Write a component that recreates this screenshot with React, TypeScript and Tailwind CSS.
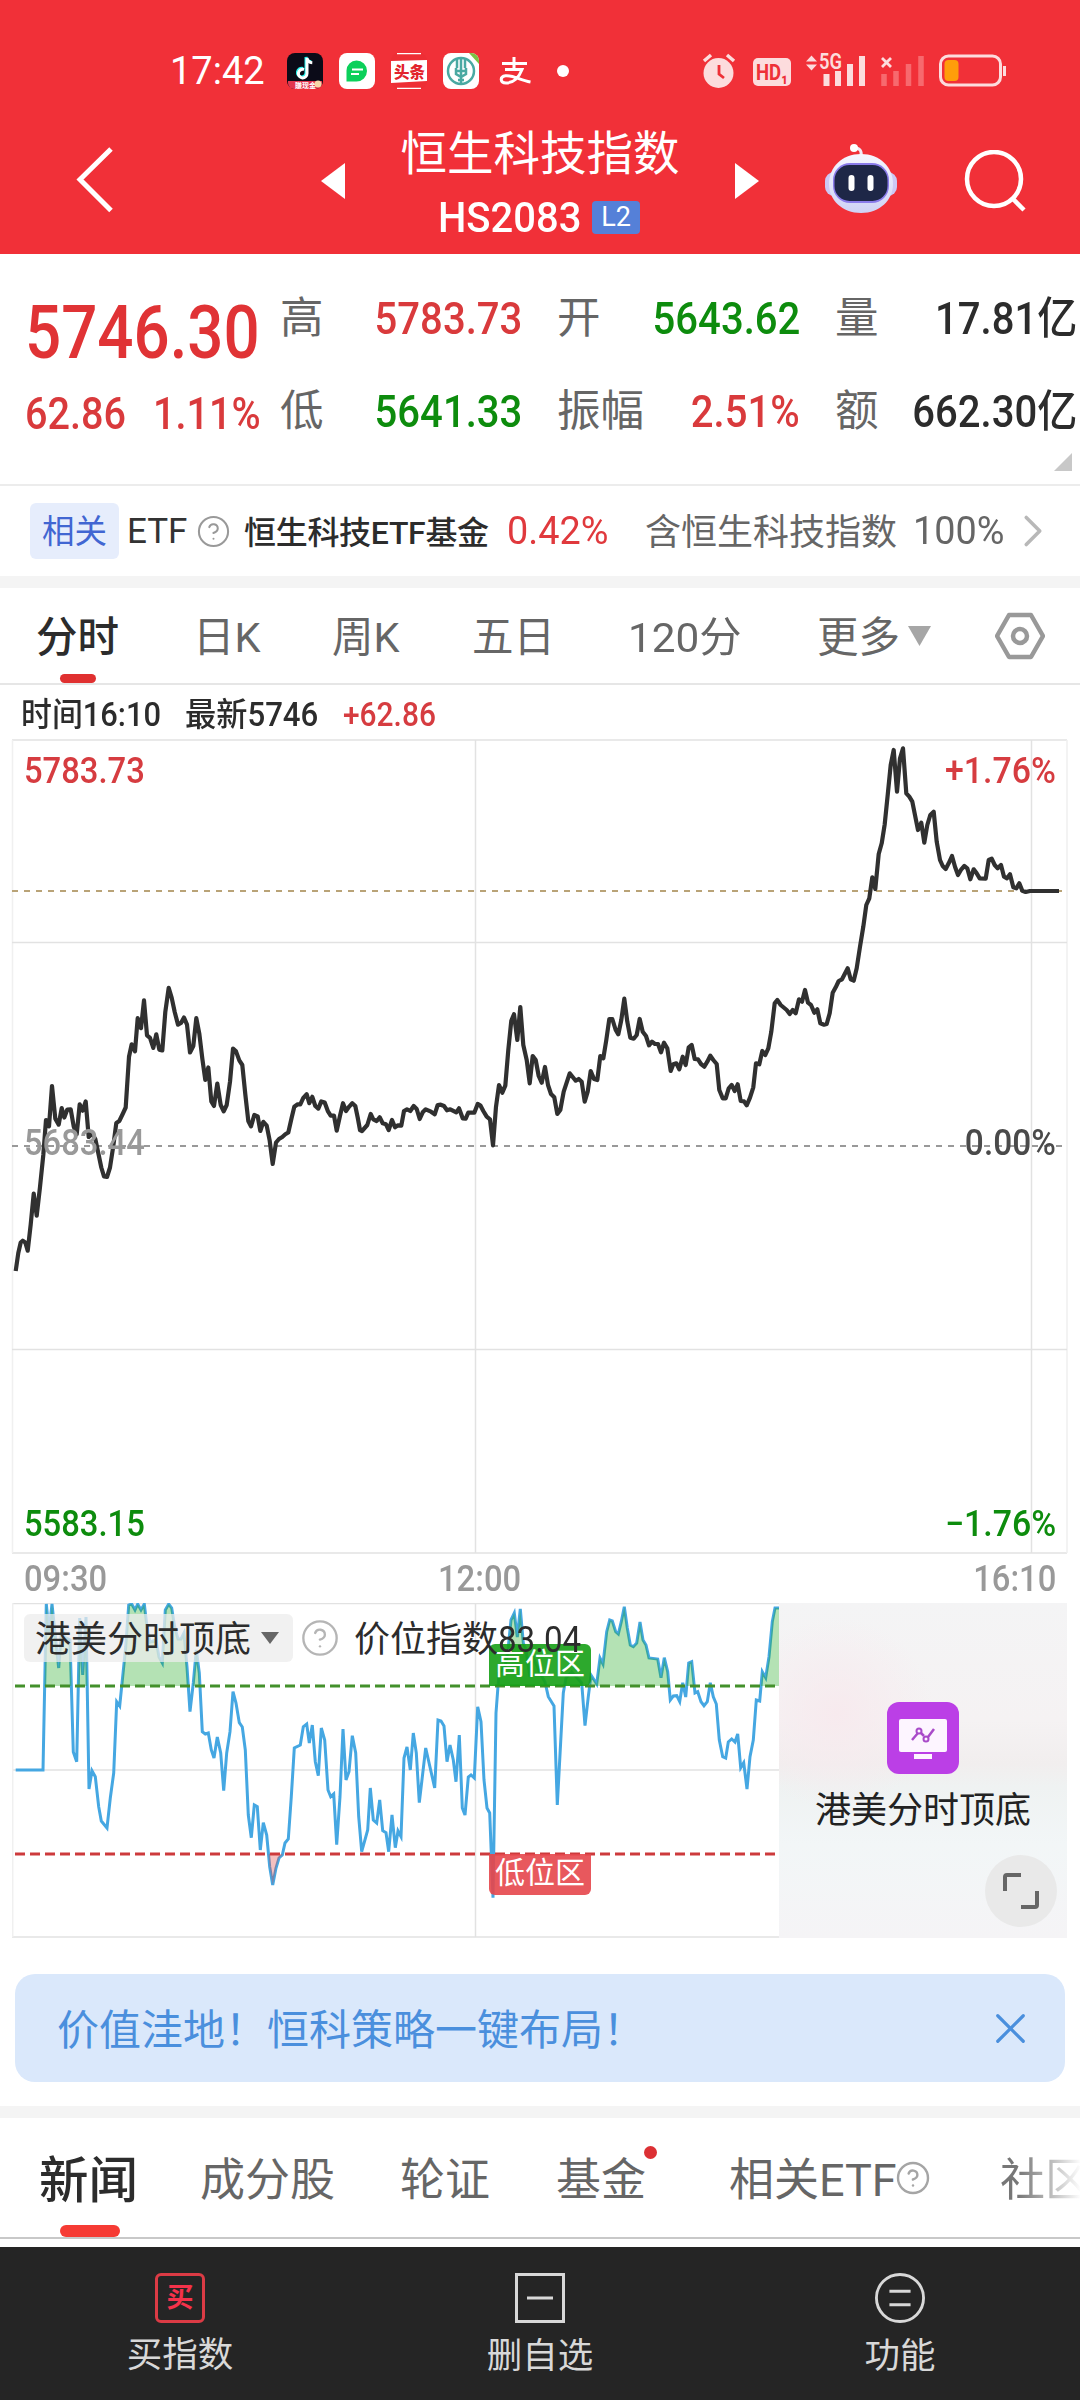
import { ChevronRight, CircleQuestionMark, X } from "lucide-react";

const pricePoints =
  "15.7,1271 18.3,1253 20.7,1242.5 22.7,1240.7 25.3,1242.5 27.7,1250.7 30.7,1224.6 33.7,1193.6 36.7,1215.7 40,1187 43.3,1155 46,1120 49,1126.4 52,1086 55.3,1118.6 58.7,1124.6 61.7,1108 64.3,1117.5 67.3,1109.6 70.7,1109.3 73.7,1126.4 76.7,1134.3 79.7,1104.3 82.7,1110.7 85.7,1101.4 88.7,1137 92,1133.6 95.3,1139 98.7,1155 101.3,1167.5 104,1176.4 107,1177 110,1167.5 113.3,1146 116.3,1122.9 119.3,1121 122.7,1114 125.7,1107.5 129,1056.8 131.7,1044.3 135,1051.4 137.7,1018.2 141,1028.2 144,1000.4 147,1035.4 150,1037.9 153.3,1047.9 156.3,1034.3 159.3,1049.6 162.3,1050.4 165.3,1012 168.7,987.9 171.7,997.9 174.7,1012 178,1024.6 181,1022.9 184,1017.5 187,1024.6 190,1052.5 193.3,1046 196.3,1018.2 199.3,1033.6 202.3,1058.6 205.3,1080 208.3,1067.5 211.3,1101.4 214,1106 217.3,1083.6 220.7,1105 223.7,1111.4 226.7,1105 230,1081.8 233,1048.6 236,1051.4 239.3,1060.4 242.3,1065 245.3,1094.3 248.3,1121 251,1126.4 254.3,1115 257.7,1116.4 260.3,1131 263.3,1121.8 266.7,1125.7 269.7,1140.7 272.7,1164 276,1142.5 279,1139 282.3,1137 285.3,1134.3 288.3,1132.5 291.7,1117.5 294.3,1106.8 297.7,1104.3 300.3,1104.3 303.3,1097.9 306.7,1094.3 309.3,1103.2 312.3,1096.8 315.3,1106 318.3,1108.6 321.3,1101.4 324.7,1102.5 328,1111.4 330.7,1115.7 334,1115.7 336.7,1130.7 340,1115.7 343,1103.2 346,1111 349,1106.8 352.3,1103.2 355.3,1106 357.7,1117.5 360,1130 " +
  "362,1131 367.3,1125 370.7,1114 373.3,1119.3 376.7,1121 379.7,1117.3 382.7,1123.3 386,1124.3 388.7,1130 392,1120 395,1127.3 398,1125.3 401.3,1125.7 404,1111 407,1109.3 410.3,1111 413.7,1106 416.7,1109 419.7,1119 422.7,1112.3 425.7,1109.3 431,1111.7 434.7,1114.3 437.7,1105 440.7,1104.7 444,1106 447,1110.3 450.3,1109.3 456.3,1112.3 459,1108.3 462.7,1118.3 465.7,1118.7 468.3,1112.7 474.3,1112.7 477.7,1104 480.3,1105.3 483.3,1111 486.7,1116.7 490,1119.3 493,1145.3 496,1106.7 499,1085 502.3,1092.7 505.3,1085.7 508.3,1050 511.3,1020.7 514,1014.3 517.3,1040 520.3,1007 523.3,1045 526.7,1060 529.7,1083.3 532.7,1056 535.7,1060 538.7,1076 541.7,1082.7 545,1067 548,1085 551,1094 554.3,1097.3 557.3,1114 560.3,1110 563.7,1091.7 569.7,1073.3 575.7,1080.7 578.7,1079 581.7,1081.7 584.7,1101.7 587.7,1091.7 590.7,1071 594,1079 597.3,1080 600.3,1056 603.3,1058.3 606.3,1040 609.3,1019 612.3,1019 615.7,1030 618.3,1034.3 621.3,1020 624.3,998.7 627.3,1021.7 630.3,1037.7 633.7,1038.7 636.7,1035 639.7,1019 642.7,1031.7 646,1036 649,1045.3 652,1041.7 655,1044 658,1044 661,1052.3 664,1042.7 667.3,1048.3 670.7,1071 673.3,1064.3 676.3,1063.3 679.3,1069.3 682.7,1056.7 685.7,1065 688.7,1047.3 691.7,1045 694.7,1059 698,1059.3 701,1064 704.3,1066.7 707.3,1061.7 710.3,1055.7 713.3,1060 716.7,1064 719.3,1090 722.7,1098.3 725.7,1098.3 728.7,1088.3 731.7,1085 734.7,1091 737.7,1084.3 740.7,1101 744,1101.3 746.7,1105.3 750,1097.7 753.3,1087.3 " +
  "756,1063.3 759.3,1064.3 762.3,1051 765.3,1055 768.3,1048.3 771.3,1031.7 774.7,1003.3 777.3,1000 780.7,1005 786.7,1010 789.7,1014 792.7,1010 795.7,1013.3 799,999.3 802,1001.7 805,990 808,1002.7 811,1005 814.3,1012.7 817.3,1009.3 820.3,1023.3 824,1024.7 826.7,1024 829.7,1013.3 832.7,992.7 835.7,987.3 838.7,981 842,979.3 847.7,968.3 850.7,979.3 853.7,980.7 856.7,968.3 860,946.7 863.3,926.7 866.3,905 869.3,898.3 872.3,877.3 875.3,889 878.7,854 881.7,843.3 884.7,824.3 887.7,795 890.7,765 893.7,750 897,791.7 900,758.3 903,748.3 906.3,793.3 909.3,796.7 912.3,801.7 915.3,816.7 918,830 921.3,822.7 924.3,842.7 927.3,825 930.3,815 933.7,811.7 936.7,841.7 940,860 942.7,866 945.7,869 948.7,863.3 952,856 955,866.7 958,875 961.3,869.3 964.3,866 967.3,868.3 970.3,879.3 973.7,869.3 976.7,873.3 979.7,878.3 985.7,878.7 988.7,860 991.7,858.7 994.7,865 997.7,868.3 1001,865 1004,876.7 1007,878.3 1010,874.3 1013.3,887.3 1016.3,888.3 1019.3,883.3 1022.3,890.7 1025.7,892 1030,891 1059,891";

const levelPoints =
  "15.7,1770 43,1770 46.3,1604 49,1632 52,1604 55.3,1636 58.7,1668 61.7,1627 64.3,1637 70,1640 73.3,1752 76.7,1761.7 79.7,1618 82.7,1675 86,1617 89,1789 92,1770.7 95.3,1776.7 98.7,1806.7 101.3,1821 107,1828 110.3,1798 113.7,1773 116.7,1701.7 119.7,1706 125.7,1647 128.7,1605 131.7,1604 135,1610 137.7,1604 141,1610 144.3,1604 147,1627 150,1642 156,1640 159,1657 162.3,1663 165.3,1610 168.7,1604 171.7,1608 174.7,1627 178,1639 181,1639 184,1633 187,1667 190,1711.7 193.3,1683 196.3,1650 199.3,1673 202.3,1731.7 205.3,1734 208.3,1733 211.3,1750 214,1758 217.3,1737 220.7,1753 223.7,1790.7 226.7,1753 230,1731.7 233,1691.7 236,1703 239.3,1722.7 242.3,1727 245.3,1750 248.3,1815 251.3,1837.7 254.3,1805 257.3,1806.7 260.3,1850 263.3,1822.7 266.7,1835 269.7,1866.7 272.7,1885 276,1868 279,1858 282.3,1855 285,1843 288.3,1839 291.3,1796.7 294.3,1748 300.3,1745 303.3,1726.7 306.7,1724 309.3,1743 312.3,1725 315.3,1761.7 318.3,1775.7 321.3,1728 324.7,1740 328,1790 330.7,1796.7 333.7,1794 336.7,1844.7 340,1796.7 343,1729 346,1780 349,1771.7 352.3,1735.7 355.7,1753 358.7,1816.7 361.7,1851.7 367.7,1830 370.3,1788 373.3,1820 376.7,1823 379.7,1800 382.7,1830.7 386,1832.7 388.7,1851.7 392,1815 395.3,1847.7 398,1831 401,1836.7 404,1758 407,1747 410.3,1770 413.3,1733 416.3,1753 419.3,1802.7 " +
  "425.7,1748 434.7,1788 438,1720 441,1721 444,1726 447,1761.7 450,1745 453.3,1760 456,1781.7 459.3,1735 462.3,1808 465,1815 468.3,1777 471,1775 474.3,1778 477.7,1706.7 481,1721.7 484,1780 487,1808 489.7,1813 493,1897.7 496,1713 499,1673 505,1667 508,1650 511,1620 514.3,1613 517.3,1637 520.3,1609 523.3,1643 526,1650 530,1677 533,1657 540,1673 545,1682 548.3,1696.7 554,1706 557.3,1805 563.3,1693 566,1678 571.7,1672 581.7,1683 585,1725.7 588.3,1696.7 591,1675 596.7,1684 600,1658 603,1664 606.7,1631.7 609.7,1620 612.3,1621 615.7,1631.7 618.3,1634 621.3,1621.7 624.3,1606.7 627.3,1628 630.3,1645 633.3,1646.7 636.7,1643 640,1622 643,1640 646,1645 649,1658 657.7,1659 661,1677.7 664.3,1657.7 667.7,1671.7 670.3,1700 673.3,1696 676.7,1695.7 679.7,1701.7 682.7,1682.7 685.7,1697 688.7,1663 691.7,1661.7 695,1693 697.7,1691.7 701,1701.7 704,1705.7 707.3,1701.7 710.3,1682.7 713.3,1696.7 716.3,1704 719.3,1740 722.7,1756.7 725.7,1758 728.3,1742 731.7,1739 735,1742 737.7,1734 740.7,1767.7 743.7,1762.7 747,1789 750,1756.7 753.3,1740 756.3,1700 759.7,1701 762.3,1671.7 765.7,1677.7 769,1656.7 772.3,1621.7 775,1608 779,1608";

const quotes = [
  { label: "高", value: "5783.73", color: "text-[#d93a3c]" },
  { label: "开", value: "5643.62", color: "text-[#0d8c0d]" },
  { label: "量", value: "17.81亿", color: "text-[#2c2c2c]" },
  { label: "低", value: "5641.33", color: "text-[#0d8c0d]" },
  { label: "振幅", value: "2.51%", color: "text-[#d93a3c]" },
  { label: "额", value: "662.30亿", color: "text-[#2c2c2c]" },
];

function StatusBar() {
  return (
    <div className="flex h-[108px] items-center pt-[34px] pl-[170px] text-white">
      <span className="w-[117px] text-[38px] leading-none">17:42</span>
      <div className="flex items-center gap-4">
        <svg width="36" height="36" viewBox="0 0 36 36">
          <rect width="36" height="36" rx="8" fill="#0b0b18" />
          <path d="M17 18.5a4.3 4.3 0 1 0 3 4V7c.6 3 2.7 4.6 5.3 4.8" transform="translate(-1 -3)" fill="none" stroke="#25f4ee" strokeWidth="3" />
          <path d="M17 18.5a4.3 4.3 0 1 0 3 4V7c.6 3 2.7 4.6 5.3 4.8" transform="translate(0 -2)" fill="none" stroke="#fff" strokeWidth="3" />
          <path d="M1 28h34v2a6 6 0 0 1-6 6H7a6 6 0 0 1-6-6z" fill="#e2354f" />
          <text x="8" y="34.5" fontSize="7" fill="#fff" fontWeight="700">賺现金</text>
          <circle cx="31" cy="31" r="3.5" fill="#f6d8a8" />
        </svg>
        <svg width="36" height="36" viewBox="0 0 36 36">
          <rect width="36" height="36" rx="8" fill="#fff" />
          <path d="M17.5 7.5a10.5 10.5 0 1 1 0 21H7.5V17.5a10 10 0 0 1 10-10z" fill="#0bd05a" />
          <path d="M13 16.5h11M12 21h8" stroke="#fff" strokeWidth="2" />
        </svg>
        <svg width="36" height="36" viewBox="0 0 36 36">
          <rect width="36" height="36" rx="8" fill="#ee2e35" />
          <path d="M6 .7h24M6 35.3h24" stroke="#fff" strokeWidth="1.2" />
          <path d="M0 8l36-1v21L0 30z" fill="#fff" />
          <text x="3" y="24.5" fontSize="15.5" fontWeight="900" fill="#e2232c">头条</text>
        </svg>
        <svg width="36" height="36" viewBox="0 0 36 36">
          <rect width="36" height="36" rx="8" fill="#fff" />
          <path d="M26 0h2a8 8 0 0 1 8 8v3z" fill="#7cc244" />
          <circle cx="18" cy="18" r="13" fill="none" stroke="#4aa9a2" strokeWidth="2.5" />
          <path d="M18 5v26M14 6v9M22 6v9M13 15v6l5 3 5-3v-6M14 18h8M15 27h6" stroke="#4aa9a2" strokeWidth="2.5" fill="none" />
        </svg>
        <svg width="36" height="36" viewBox="0 0 36 36" fill="none" stroke="#fff" strokeWidth="3" className="ml-[2px]">
          <path d="M5 10.5h25M17 4v12M8 16.5h17c-3 8-9 13.5-16 13.5-6 0-6.5-6.5-.5-7.3 7-.8 14 4.3 25 6.3" />
        </svg>
        <span className="ml-[8px] size-[12px] rounded-full bg-white" />
      </div>
      <svg className="ml-auto mr-[72px] overflow-visible" width="306" height="40" viewBox="702 51 306 40" fill="none">
        <circle cx="718.5" cy="73" r="15" fill="#fcdcdd" />
        <path d="M704 61l7-6M734 61l-7-6" stroke="#fcdcdd" strokeWidth="3.5" />
        <path d="M719 65v9l5 4" stroke="#ee3037" strokeWidth="2.8" />
        <rect x="753" y="58" width="38" height="28" rx="5" fill="#fcdcdd" />
        <text x="756" y="80" fontSize="22" fontWeight="700" fill="#ee3037" textLength="32" lengthAdjust="spacingAndGlyphs">HD₁</text>
        <path d="M806 61.5l5.5-6 5.5 6zM806 64.5l5.5 6 5.5-6z" fill="#fcdcdd" />
        <text x="819" y="69" fontSize="22" fontWeight="600" fill="#fcdcdd" textLength="23" lengthAdjust="spacingAndGlyphs">5G</text>
        <path d="M826.5 86v-12M838 86v-15M850 86v-22M862 86v-30" stroke="#fcdcdd" strokeWidth="6" />
        <path d="M882 58l9 9M891 58l-9 9" stroke="#fcdcdd" strokeWidth="2.8" />
        <path d="M884 86v-12M896 86v-15M908.5 86v-22M921 86v-30" stroke="#f7696e" strokeWidth="5.5" />
        <rect x="940.5" y="56" width="60" height="29" rx="8" stroke="#fcdcdd" strokeWidth="3" />
        <rect x="944.5" y="60" width="14" height="21" rx="4" fill="#ff9d0a" />
        <path d="M1004.5 66v10" stroke="#fcdcdd" strokeWidth="3" />
      </svg>
    </div>
  );
}

function Robot() {
  return (
    <svg width="74" height="72" viewBox="0 0 74 72">
      <defs>
        <linearGradient id="head" x1="0" y1="0" x2="0" y2="1">
          <stop offset="0" stopColor="#f6f7ff" />
          <stop offset="1" stopColor="#cfd2f5" />
        </linearGradient>
      </defs>
      <path d="M37 14c1-6-1-9-6-9" stroke="#f3e9f5" strokeWidth="3" fill="none" />
      <circle cx="30" cy="5" r="4" fill="#fff" />
      <rect x="1" y="29" width="72" height="24" rx="9" fill="#cdc8f4" />
      <path d="M37 11c19 0 32 13 32 30 0 16-13 29-32 29S5 57 5 41c0-17 13-30 32-30z" fill="url(#head)" />
      <rect x="9" y="20" width="56" height="40" rx="17" fill="#8a7bea" />
      <rect x="10.5" y="22" width="53" height="36" rx="15" fill="#1e2747" />
      <path d="M27.5 35v10M46.5 35v10" stroke="#fff" strokeWidth="6" strokeLinecap="round" />
    </svg>
  );
}

function Header() {
  return (
    <header className="h-[254px] bg-[#f13038]">
      <StatusBar />
      <div className="flex h-[146px] items-center text-white">
        <svg className="mb-[5px] ml-[75px]" width="40" height="68" viewBox="0 0 40 68" fill="none" stroke="#fff" strokeWidth="5">
          <path d="M36 4L5 34.5l31 31" />
        </svg>
        <svg className="ml-[206px]" width="24" height="36" viewBox="0 0 24 36" fill="#fff">
          <path d="M24 0v36L0 18z" />
        </svg>
        <div className="mx-[55px] flex w-[280px] flex-col items-center pt-[8px]">
          <h1 className="h-[66px] whitespace-nowrap text-[46.5px] leading-[60px]">恒生科技指数</h1>
          <div className="flex items-center">
            <span className="w-[154px] whitespace-nowrap">
              <span className="inline-block origin-left scale-x-[.94] text-[42.5px] leading-[56px] font-medium">HS2083</span>
            </span>
            <span className="mr-[2px] mb-[2px] flex h-[33px] w-[48px] items-center justify-center rounded-sm bg-[#5580d8] text-[27px]">L2</span>
          </div>
        </div>
        <svg width="24" height="36" viewBox="0 0 24 36" fill="#fff">
          <path d="M0 0v36l24-18z" />
        </svg>
        <div className="mb-[4px] ml-[65px]">
          <Robot />
        </div>
        <svg className="ml-[66px]" width="62" height="62" viewBox="0 0 62 62" fill="none" stroke="#fff" strokeWidth="4.5">
          <circle cx="30" cy="29" r="27" />
          <path d="M49 49l11 11" />
        </svg>
      </div>
    </header>
  );
}

function Summary() {
  return (
    <section className="relative flex h-[232px] border-b-2 border-[#ececec]">
      <div className="w-[280px] pl-[25px] font-medium text-[#e03335]">
        <div className="mt-[42px] h-[74px] w-max origin-left scale-x-[.86] text-[74px] leading-[74px]">5746.30</div>
        <div className="mt-[21px] flex w-max origin-left scale-x-[.9] gap-[30px] text-[44px] leading-[46px] text-[#d93a3c]">
          <span>62.86</span>
          <span>1.11%</span>
        </div>
      </div>
      <div className="grid h-[188px] grid-cols-[242px_243px_242px] gap-x-[35px] pt-[18px] text-[43.5px]">
        {quotes.map((item) => (
          <div key={item.label} className="flex h-[93px] items-center justify-between whitespace-nowrap pt-[1px]">
            <span className="text-[#666]">{item.label}</span>
            <span className={`origin-right scale-x-[.91] text-[44px] font-medium ${item.color}`}>{item.value}</span>
          </div>
        ))}
      </div>
      <svg className="absolute right-[8px] bottom-[13px]" width="18" height="18" viewBox="0 0 18 18">
        <path d="M18 0v18H0z" fill="#c8c8c8" />
      </svg>
    </section>
  );
}

function RelatedEtf() {
  return (
    <section className="flex h-[90px] items-center whitespace-nowrap pl-[30px]">
      <span className="flex h-[56px] w-[89px] items-center justify-center rounded-md bg-[#e6edfc] pt-[3px] text-[32.5px] text-[#4166d2]">相关</span>
      <span className="ml-[8px] w-[69px] pt-[3px] text-[35px] text-[#333]">ETF</span>
      <CircleQuestionMark size={35} strokeWidth={1.4} color="#999" />
      <span className="ml-[13px] w-[263px] pt-[3px] text-[32px] font-medium tracking-[-0.3px] text-[#2c2c2c]">恒生科技ETF基金</span>
      <span className="w-[138px]">
        <span className="inline-block origin-left scale-x-[.97] text-[39px] text-[#e0393d]">0.42%</span>
      </span>
      <span className="w-[268px] pt-[4px] text-[36px] text-[#666]">含恒生科技指数</span>
      <span className="w-[93px]">
        <span className="inline-block origin-left scale-x-[.97] text-[39px] text-[#666]">100%</span>
      </span>
      <ChevronRight size={54} strokeWidth={1.6} color="#b8b8b8" />
    </section>
  );
}

function PeriodTabs() {
  return (
    <nav className="relative flex h-[97px] items-center whitespace-nowrap border-b-2 border-[#e6e6e6] pt-[6px] pl-[36px] text-[41.5px] text-[#666]">
      <span className="w-[157px] font-medium text-[#2c2c2c]">分时</span>
      <span className="w-[139px]">日K</span>
      <span className="w-[140px]">周K</span>
      <span className="w-[156px]">五日</span>
      <span className="w-[189px]">
        <span className="inline-block origin-left scale-x-[1.02]">120分</span>
      </span>
      <span className="w-[90px]">更多</span>
      <svg className="mb-[5px]" width="25" height="20" viewBox="0 0 25 20" fill="#a6a6a6">
        <path d="M1 0h23L12.5 20z" />
      </svg>
      <svg className="mb-[6px] ml-[63px]" width="50" height="48" viewBox="0 0 50 48" fill="none" stroke="#999" strokeWidth="4.5" strokeLinejoin="round">
        <path d="M14 3h22l12 21-12 21H14L2 24z" />
        <circle cx="25" cy="24" r="7" />
      </svg>
      <span className="absolute bottom-0 left-[60px] h-[9px] w-[36px] rounded-full bg-[#e03030]" />
    </nav>
  );
}

function PriceChart() {
  const label = "absolute text-[36px] leading-[36px] font-medium";
  const left = `${label} origin-left scale-x-[.91] left-[24px]`;
  const right = `${label} origin-right scale-x-[.94] right-[24px]`;
  return (
    <section className="relative h-[868px]">
      <svg className="block" width="1080" height="868" viewBox="0 735 1080 868" fill="none">
        <path d="M12 740H1067M12 1553H1067" stroke="#e9e9e9" strokeWidth="2" />
        <path d="M12.5 740V1553M1067 740V1553" stroke="#f0f0f0" strokeWidth="1.5" />
        <path d="M12 942.5H1067M12 1349.5H1067M475.5 740V1553M1031.5 740V1553" stroke="#e2e2e2" strokeWidth="1.5" />
        <path d="M12 891H1062" stroke="#b9a377" strokeWidth="2" strokeDasharray="6 6" />
        <path d="M12 1146H1062" stroke="#999" strokeWidth="2" strokeDasharray="6 6" />
        <polyline points={pricePoints} stroke="#303030" strokeWidth="4.2" strokeLinejoin="round" />
      </svg>
      <span className={`${left} top-[18px] text-[#d63c40]`}>5783.73</span>
      <span className={`${right} top-[18px] text-[#d63c40]`}>+1.76%</span>
      <span className={`${left} top-[390px] text-[#999]`}>5683.44</span>
      <span className={`${label} top-[390px] right-[24px] origin-right scale-x-[.93] text-[#4a4a4a]`}>0.00%</span>
      <span className={`${left} top-[771px] text-[#0d8c0d]`}>5583.15</span>
      <span className={`${right} top-[771px] text-[#0d8c0d]`}>−1.76%</span>
      <span className={`${left} top-[826px] text-[#999]`}>09:30</span>
      <span className={`${label} top-[826px] left-[438px] origin-left scale-x-[.91] text-[#999]`}>12:00</span>
      <span className={`${label} top-[826px] right-[24px] origin-right scale-x-[.91] text-[#999]`}>16:10</span>
    </section>
  );
}

function LevelChart() {
  const highArea = `15.7,1686 ${levelPoints} 779,1686`;
  const lowArea = `15.7,1854 ${levelPoints} 779,1854`;
  return (
    <section className="relative flex h-[335px] pl-[12px] text-[#2c2c2c]">
      <svg className="block shrink-0" width="767" height="335" viewBox="12 1603 767 335" fill="none">
        <clipPath id="high">
          <rect x="12" y="1603" width="767" height="83" />
        </clipPath>
        <clipPath id="low">
          <rect x="12" y="1854" width="767" height="83" />
        </clipPath>
        <path d="M12 1603.5H779M12 1937H779M12 1770H779M475.5 1603V1937" stroke="#e2e2e2" strokeWidth="1.5" />
        <path d="M12.7 1603V1937" stroke="#f0f0f0" strokeWidth="1.5" />
        <polyline points={levelPoints} stroke="#45a7e2" strokeWidth="3" />
        <polygon points={highArea} fill="#1ca81c" fillOpacity=".33" clipPath="url(#high)" />
        <polygon points={lowArea} fill="#e04040" fillOpacity=".33" clipPath="url(#low)" />
        <path d="M15 1686H777" stroke="#43902b" strokeWidth="3" strokeDasharray="10 5" />
        <path d="M15 1854H777" stroke="#cd3a3c" strokeWidth="3" strokeDasharray="10 5" />
      </svg>
      <div className="flex h-[335px] w-[288px] flex-col items-center bg-[radial-gradient(circle_at_20%_33%,#f7eaee_0%,transparent_30%),linear-gradient(180deg,#f4f4f5_0%,#f5f2f3_35%,#f1eeee_48%,#eff2f2_55%,#f2f6f7_72%,#f5f4f6_100%)] pt-[99px]">
        <svg width="72" height="72" viewBox="0 0 72 72" fill="none">
          <rect width="72" height="72" rx="12" fill="#bb3fe6" />
          <rect x="12" y="17" width="48" height="33" rx="2" fill="#fdf5ff" />
          <rect x="27" y="52" width="18" height="5" fill="#fdf5ff" />
          <path d="M25 38l6-7M34 31l3 3M41 35l6-8" stroke="#a94bc9" strokeWidth="2.5" />
          <circle cx="32" cy="29" r="2.5" stroke="#a94bc9" strokeWidth="2" />
          <circle cx="39" cy="37" r="2.5" stroke="#a94bc9" strokeWidth="2" />
        </svg>
        <span className="mt-[11px] whitespace-nowrap text-[36px] leading-[52px] text-[#222]">港美分时顶底</span>
        <span className="mt-[18px] mr-[10px] flex size-[72px] shrink-0 items-center justify-center self-end rounded-full bg-[#e9e9e9]">
          <svg width="38" height="38" viewBox="0 0 38 38" fill="none" stroke="#666" strokeWidth="4">
            <path d="M3 19V5a2 2 0 0 1 2-2h14M35 19v14a2 2 0 0 1-2 2H19" />
          </svg>
        </span>
      </div>
      <span className="absolute top-[41px] left-[489px] flex h-[42px] w-[102px] items-center justify-center rounded-t-md rounded-br-md bg-[#16a016]/90 pb-[3px] text-[30px] text-white">高位区</span>
      <span className="absolute top-[251px] left-[489px] flex h-[41px] w-[102px] items-center justify-center rounded-b-md bg-[#e5464b]/90 pb-[4px] text-[30px] text-white">低位区</span>
      <div className="absolute top-[11px] left-[24px] flex h-[48px] items-center whitespace-nowrap">
        <div className="flex h-[48px] w-[269px] items-center rounded-md bg-[#ececec]/75 pl-[11px] text-[36px]">
          <span className="w-[226px] pt-[4px]">港美分时顶底</span>
          <svg width="18" height="12" viewBox="0 0 18 12" fill="#666">
            <path d="M0 0h18L9 12z" />
          </svg>
        </div>
        <CircleQuestionMark className="mx-[7px]" size={40} strokeWidth={1.4} color="#b5b5b5" />
        <span className="ml-[7px] pt-[4px] text-[36px]">价位指数</span>
        <span className="origin-left scale-x-[.92] pt-[4px] text-[36px]">83.04</span>
      </div>
    </section>
  );
}

function NewsTabs() {
  return (
    <nav className="relative flex h-[121px] items-center overflow-hidden whitespace-nowrap border-b-2 border-[#c8c8c8] pt-[7px] pl-[39px] text-[45px] text-[#666]">
      <span className="w-[161px] shrink-0 text-[49.5px] font-medium text-[#2c2c2c]">新闻</span>
      <span className="w-[200px] shrink-0">成分股</span>
      <span className="w-[156px] shrink-0">轮证</span>
      <span className="relative w-[173px] shrink-0">
        基金
        <span className="absolute top-[-1px] left-[88px] size-[13px] rounded-full bg-[#dc3034]" />
      </span>
      <span className="w-[166px] shrink-0">相关ETF</span>
      <CircleQuestionMark className="mb-[6px] shrink-0" size={36} strokeWidth={1.6} color="#a5a5a5" />
      <span className="ml-[69px] shrink-0 bg-linear-to-r from-[#777] from-20% to-white to-90% bg-clip-text text-transparent">社区</span>
      <span className="absolute bottom-0 left-[60px] h-[12px] w-[60px] rounded-full bg-[#f63b34]" />
    </nav>
  );
}

function BottomBar() {
  return (
    <footer className="mt-[8px] grid h-[153px] grid-cols-3 bg-[#252525] pt-[26px] text-[35.5px] leading-[50px] text-[#d8d8d8]">
      <div className="flex flex-col items-center">
        <span className="flex size-[50px] items-center justify-center rounded-md border-[3px] border-[#dc3b45] text-[27px] leading-none font-bold text-[#f5324a]">买</span>
        <span className="mt-[7px]">买指数</span>
      </div>
      <div className="flex flex-col items-center">
        <svg width="50" height="50" viewBox="0 0 50 50" fill="none" stroke="#d8d8d8" strokeWidth="3">
          <path d="M1.5 1.5h47v47h-47zM12 25h26" />
        </svg>
        <span className="mt-[8px]">删自选</span>
      </div>
      <div className="flex flex-col items-center">
        <svg width="52" height="50" viewBox="0 0 52 52" fill="none" stroke="#d8d8d8" strokeWidth="3">
          <circle cx="26" cy="26" r="24.5" />
          <path d="M15 19h22M15 33h22" />
        </svg>
        <span className="mt-[8px]">功能</span>
      </div>
    </footer>
  );
}

export default function App() {
  return (
    <div className="h-[2400px] w-[1080px] overflow-hidden bg-white font-[Roboto,'Noto_Sans_CJK_SC',sans-serif]">
      <Header />
      <Summary />
      <RelatedEtf />
      <div className="h-[12px] bg-[#f4f4f4]" />
      <PeriodTabs />
      <div className="flex h-[50px] items-center whitespace-nowrap pt-[10px] pl-[21px] text-[32.5px] font-medium text-[#2c2c2c]">
        <span className="w-[164px]">
          <span className="inline-block origin-left scale-x-[.95]">时间16:10</span>
        </span>
        <span className="w-[158px]">
          <span className="inline-block origin-left scale-x-[.96]">最新5746</span>
        </span>
        <span className="origin-left scale-x-[.92] text-[#d63c40]">+62.86</span>
      </div>
      <PriceChart />
      <LevelChart />
      <div className="mx-[15px] mt-[36px] flex h-[108px] items-center justify-between rounded-[20px] bg-[#dae8fb] pr-[29px] pl-[42px] text-[42px] text-[#4a8fdd]">
        <span className="pt-[4px]">价值洼地！恒科策略一键布局！</span>
        <X size={51} strokeWidth={1.5} />
      </div>
      <div className="mt-[24px] h-[12px] bg-[#f4f4f4]" />
      <NewsTabs />
      <BottomBar />
    </div>
  );
}
